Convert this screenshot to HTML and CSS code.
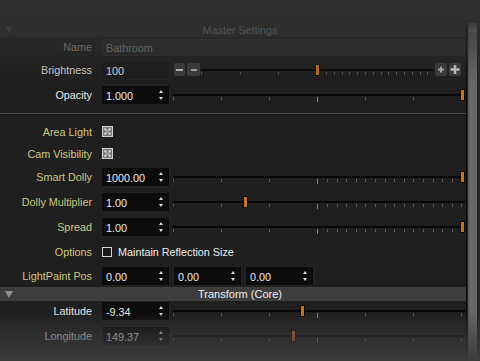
FILE: index.html
```html
<!doctype html>
<html lang="en">
<head>
  <meta charset="UTF-8" />
  <title>Master Settings</title>
  <link rel="stylesheet" href="styles.css">
</head>
<body>
  <div class="wrap">
    <main class="pane">
      <div class="hdr dim"><span class="tri"></span>Master Settings</div>

      <div class="row r-name">
        <div class="lbl name-lbl">Name</div>
        <div class="namebox">Bathroom</div>
      </div>

      <div class="row">
        <div class="lbl bri-lbl">Brightness</div>
        <div class="num flat">100</div>
        <div class="btns-l">
          <span class="sbtn w11"><i class="bar b7"></i></span>
          <span class="sbtn w13"><i class="bar b6"></i></span>
        </div>
        <div class="slider bri">
          <div class="track"></div><div class="ticks"></div>
          <div class="knob" style="left:114px"></div>
        </div>
        <div class="btns-r">
          <span class="sbtn w12">
            <svg width="12" height="13" viewBox="0 0 12 13"><path d="M6 3.5v6M3 6.5h6" stroke="#b4b4b4" stroke-width="2"/></svg>
          </span>
          <span class="sbtn w12">
            <svg width="12" height="13" viewBox="0 0 12 13"><path d="M6 2v9M1.5 6.5h9" stroke="#cfcfcf" stroke-width="2.6"/></svg>
          </span>
        </div>
      </div>

      <div class="row">
        <div class="lbl">Opacity</div>
        <div class="num spin">1.000</div>
        <div class="slider lin">
          <div class="track"></div><div class="ticks"></div>
          <div class="knob" style="left:287px"></div>
        </div>
      </div>

      <div class="sep"></div>

      <div class="row r-chk1">
        <div class="lbl gold">Area Light</div>
        <svg class="chk" width="11" height="11" viewBox="0 0 11 11"><rect x=".5" y=".5" width="10" height="10" fill="#7c7c7c" stroke="#cfcfcf"/><path d="M2.5 2.5l6 6M8.5 2.5l-6 6" stroke="#e4e4e4" stroke-width="1.6"/><rect x="4" y="4" width="3" height="3" fill="#9a9a9a"/></svg>
      </div>
      <div class="row r-chk2">
        <div class="lbl gold">Cam Visibility</div>
        <svg class="chk" width="11" height="11" viewBox="0 0 11 11"><rect x=".5" y=".5" width="10" height="10" fill="#7c7c7c" stroke="#cfcfcf"/><path d="M2.5 2.5l6 6M8.5 2.5l-6 6" stroke="#e4e4e4" stroke-width="1.6"/><rect x="4" y="4" width="3" height="3" fill="#9a9a9a"/></svg>
      </div>

      <div class="row">
        <div class="lbl gold">Smart Dolly</div>
        <div class="num spin">1000.00</div>
        <div class="slider split">
          <div class="track"></div><div class="ticks"></div>
          <div class="knob" style="left:287px"></div>
        </div>
      </div>
      <div class="row">
        <div class="lbl gold">Dolly Multiplier</div>
        <div class="num spin">1.00</div>
        <div class="slider split">
          <div class="track"></div><div class="ticks"></div>
          <div class="knob" style="left:70px"></div>
        </div>
      </div>
      <div class="row">
        <div class="lbl gold">Spread</div>
        <div class="num spin">1.00</div>
        <div class="slider split">
          <div class="track"></div><div class="ticks"></div>
          <div class="knob" style="left:287px"></div>
        </div>
      </div>

      <div class="row">
        <div class="lbl gold">Options</div>
        <span class="box"></span>
        <span class="opt">Maintain Reflection Size</span>
      </div>

      <div class="row r-lp">
        <div class="lbl gold">LightPaint Pos</div>
        <div class="num spin">0.00</div>
        <div class="num spin">0.00</div>
        <div class="num spin">0.00</div>
      </div>

      <div class="hdr core"><span class="tri"></span>Transform (Core)</div>

      <div class="row r-lat">
        <div class="lbl">Latitude</div>
        <div class="num spin">-9.34</div>
        <div class="slider lin">
          <div class="track"></div><div class="ticks"></div>
          <div class="knob" style="left:127px"></div>
        </div>
      </div>
      <div class="row">
        <div class="lbl">Longitude</div>
        <div class="num spin">149.37</div>
        <div class="slider lin">
          <div class="track"></div><div class="ticks"></div>
          <div class="knob" style="left:118px"></div>
        </div>
      </div>
    </main>
    <div class="sbar"><div class="thumb"></div></div>
  </div>

  <div class="fade-top" aria-hidden="true"></div>
  <div class="fade-bot" aria-hidden="true"></div>
</body>
</html>
```

FILE: styles.css
```css
*{ box-sizing:border-box; }
html,body{ margin:0; }
body{
  width:480px; height:361px; overflow:hidden; position:relative;
  background:#1f1f1f;
  font-family:"Liberation Sans", Arial, sans-serif; font-size:10.8px;
  color:#e2e2e2;
}
.wrap{ display:flex; height:361px; }
.pane{ width:466px; padding-top:22px; background:#1f1f1f; }

/* scrollbar */
.sbar{
  width:14px; padding-top:23px; background:#262626;
  border-left:1px solid #070707;
}
.thumb{
  width:9px; height:100%; margin-left:1px;
  background:linear-gradient(#7c7c7c 0 9px, #696969 9px);
  border-left:1px solid #575757;
}

/* section headers */
.hdr{
  height:15px; display:flex; align-items:center; justify-content:center;
  position:relative; padding-left:14px;
  background:#2b2b2b; color:#8a8a8a;
}
.hdr.core{ height:14px; background:#3d3d3d; color:#ececec; font-size:11px; }
.tri{
  position:absolute; left:5px; top:4px;
  border-left:4px solid transparent; border-right:4px solid transparent;
  border-top:7px solid #8c8c8c;
}
.hdr.dim .tri{ border-top-color:#555; }

/* rows */
.row{ display:flex; align-items:center; height:25px; gap:3px; }
.r-name{ height:20px; }
.r-chk1{ height:23px; }
.r-chk2{ height:21px; }
.r-lp{ height:23px; }
.r-lat{ height:22px; align-items:flex-start; }
.r-lat .lbl{ line-height:20px; }
.lbl{
  width:92px; margin-right:6px; text-align:right; white-space:nowrap;
  color:#e6e6e6;
}
.lbl.gold{ color:#cdc77f; }
.name-lbl{ color:#9a9a9a; }
.bri-lbl{ color:#dadada; }

.namebox{
  flex:1; height:17px; margin-right:1px; padding:2px 6px 0 4px;
  background:#2a2a2a; border:1px solid #303030; border-radius:3px;
  color:#8a8a8a;
}

.num{
  width:69px; height:20px; flex:none; position:relative;
  padding:4px 0 0 4px;
  background:#0c0c0c; border:1px solid #222; color:#ededed;
}
.num.flat{ background:#1b1b1b; color:#e0e0e0; }
.spin::before,.spin::after{
  content:""; position:absolute; right:6px;
  border-left:2.5px solid transparent; border-right:2.5px solid transparent;
}
.spin::before{ top:4px; border-bottom:3px solid #d8d8d8; }
.spin::after{ bottom:4px; border-top:3px solid #d8d8d8; }

/* brightness buttons */
.btns-l{ display:flex; gap:2px; margin-left:1px; }
.btns-r{ display:flex; gap:2px; margin-right:5px; }
.sbtn{
  height:13px; display:flex; align-items:center; justify-content:center;
  background:#3d3d3d; border-radius:2px;
}
.w11{ width:11px; } .w12{ width:12px; } .w13{ width:13px; }
.bar{ display:block; height:2px; background:#c2c2c2; }
.b7{ width:7px; } .b6{ width:6px; background:#acacac; }

/* sliders */
.slider{ flex:1; height:20px; position:relative; }
.slider.bri{ margin-left:-2px; margin-right:-3px; }
.track{ position:absolute; left:0; right:1px; top:9px; height:2px; background:#070707; }
.ticks{ position:absolute; left:0; right:0; top:12px; height:3px; }
.ticks::after{
  content:""; position:absolute; left:144px; top:0; width:1px; height:5px; background:#858585;
}
.lin .ticks{
  background:repeating-linear-gradient(90deg,#5a5a5a 0 1px,transparent 1px 48px) 0 0/289px 100% no-repeat;
}
.split .ticks{
  background:
    repeating-linear-gradient(90deg,#5a5a5a 0 1px,transparent 1px 48px) 0 0/145px 100% no-repeat,
    repeating-linear-gradient(90deg,#5a5a5a 0 1px,transparent 1px 9.6px) 153.6px 0/136px 100% no-repeat;
}
.bri .ticks{
  background:
    repeating-linear-gradient(90deg,#555 0 1px,transparent 1px 38.5px) 0 0/117px 100% no-repeat,
    repeating-linear-gradient(90deg,#555 0 1px,transparent 1px 7.8px) 125px 0/111px 100% no-repeat;
}
.bri .ticks::after{ display:none; }
.knob{
  position:absolute; top:4px; width:5px; height:12px;
  background:#c8741d; border:1px solid #120a02;
}

/* separator */
.sep{ height:13px; position:relative; }
.sep::after{
  content:""; position:absolute; left:0; right:0; top:6px; height:1px;
  background:#4a4a4a; box-shadow:0 1px 0 #161616;
}

/* checkboxes */
.chk{ display:block; margin-left:1px; }
.box{
  width:10px; height:10px; margin-left:1px; flex:none;
  border:1px solid #d6d6d6; background:#1a1a1a;
}
.opt{ margin-left:3px; color:#ececec; }

/* fades over the edges */
.fade-top{
  position:absolute; left:0; top:0; width:480px; height:90px; pointer-events:none;
  background:linear-gradient(#2f2f2f 0, #2f2f2f 18px, rgba(47,47,47,.6) 30px,
    rgba(47,47,47,.45) 48px, rgba(47,47,47,.15) 70px, rgba(47,47,47,0) 88px);
}
.fade-bot{
  position:absolute; left:0; bottom:0; width:480px; height:50px; pointer-events:none;
  background:linear-gradient(rgba(58,58,58,0) 0, rgba(58,58,58,.55) 24px, rgba(60,60,60,.97) 50px);
}
```
